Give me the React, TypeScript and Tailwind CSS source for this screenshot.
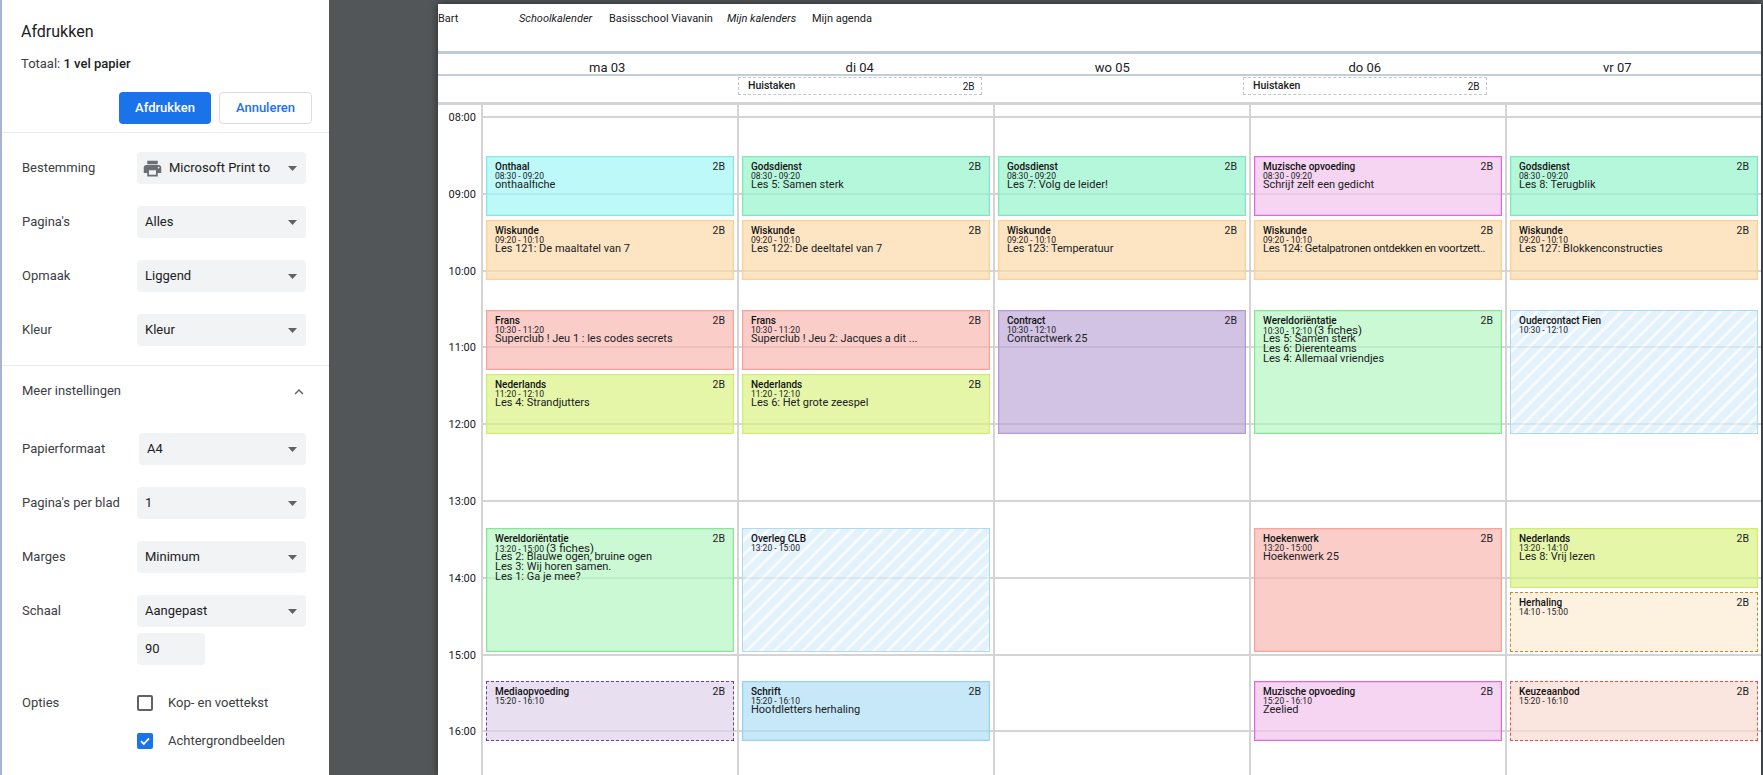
import { MdPrint, MdExpandLess } from "react-icons/md";

const HOUR = 76.8;
const HOURS = ["08:00", "09:00", "10:00", "11:00", "12:00", "13:00", "14:00", "15:00", "16:00"];

const STYLES = {
  cyan: "bg-[#a1f6f6b3] border border-[#86e9e4] shadow-[inset_0_0_0_1px_#86e9e440]",
  mint: "bg-[#95f4ccb3] border border-[#84e6bd] shadow-[inset_0_0_0_1px_#84e6bd40]",
  orange: "bg-[#fcd8a9b3] border border-[#fbd199] shadow-[inset_0_0_0_1px_#fbd19940]",
  red: "bg-[#f9b8b1b3] border border-[#fba398] shadow-[inset_0_0_0_1px_#fba39840]",
  lime: "bg-[#daf283b3] border border-[#d0ee72] shadow-[inset_0_0_0_1px_#d0ee7240]",
  purple: "bg-[#bfa8d8b3] border border-[#b29cd4] shadow-[inset_0_0_0_1px_#b29cd440]",
  green: "bg-[#b3f6c0b3] border border-[#88e696] shadow-[inset_0_0_0_1px_#88e69640]",
  pink: "bg-[#f1c3ebb3] border border-[#e268dc] shadow-[inset_0_0_0_1px_#e268dc40]",
  blue: "bg-[#afdef5b3] border border-[#98d2f0] shadow-[inset_0_0_0_1px_#98d2f040]",
  hatch:
    "border border-[#aed9f3] bg-[repeating-linear-gradient(135deg,#d7ecf9b3_0,#d7ecf9b3_7px,#f4f9fdb3_7px,#f4f9fdb3_10px)]",
  lavender: "bg-[#ded1eab3] border border-dashed border-[#6f3f9e]",
  peach: "bg-[#fcebd3b3] border border-dashed border-[#c4892c]",
  salmon: "bg-[#f9dbd1b3] border border-dashed border-[#ef4b40]",
};

type Ev = {
  title: string;
  from: string;
  to: string;
  kind: keyof typeof STYLES;
  lines?: string[];
  fiches?: string;
  noClass?: boolean;
  tight?: boolean;
};

const DAYS: Ev[][] = [
  [
    { title: "Onthaal", from: "08:30", to: "09:20", kind: "cyan", lines: ["onthaalfiche"] },
    { title: "Wiskunde", from: "09:20", to: "10:10", kind: "orange", lines: ["Les 121: De maaltafel van 7"] },
    { title: "Frans", from: "10:30", to: "11:20", kind: "red", lines: ["Superclub ! Jeu 1 : les codes secrets"] },
    { title: "Nederlands", from: "11:20", to: "12:10", kind: "lime", lines: ["Les 4: Strandjutters"] },
    {
      title: "Wereldoriëntatie",
      from: "13:20",
      to: "15:00",
      kind: "green",
      fiches: "(3 fiches)",
      lines: ["Les 2: Blauwe ogen, bruine ogen", "Les 3: Wij horen samen.", "Les 1: Ga je mee?"],
    },
    { title: "Mediaopvoeding", from: "15:20", to: "16:10", kind: "lavender" },
  ],
  [
    { title: "Godsdienst", from: "08:30", to: "09:20", kind: "mint", lines: ["Les 5: Samen sterk"] },
    { title: "Wiskunde", from: "09:20", to: "10:10", kind: "orange", lines: ["Les 122: De deeltafel van 7"] },
    { title: "Frans", from: "10:30", to: "11:20", kind: "red", lines: ["Superclub ! Jeu 2: Jacques a dit ..."] },
    { title: "Nederlands", from: "11:20", to: "12:10", kind: "lime", lines: ["Les 6: Het grote zeespel"] },
    { title: "Overleg CLB", from: "13:20", to: "15:00", kind: "hatch", noClass: true },
    { title: "Schrift", from: "15:20", to: "16:10", kind: "blue", lines: ["Hoofdletters herhaling"] },
  ],
  [
    { title: "Godsdienst", from: "08:30", to: "09:20", kind: "mint", lines: ["Les 7: Volg de leider!"] },
    { title: "Wiskunde", from: "09:20", to: "10:10", kind: "orange", lines: ["Les 123: Temperatuur"] },
    { title: "Contract", from: "10:30", to: "12:10", kind: "purple", lines: ["Contractwerk 25"] },
  ],
  [
    { title: "Muzische opvoeding", from: "08:30", to: "09:20", kind: "pink", lines: ["Schrijf zelf een gedicht"] },
    {
      title: "Wiskunde",
      from: "09:20",
      to: "10:10",
      kind: "orange",
      tight: true,
      lines: ["Les 124: Getalpatronen ontdekken en voortzett.."],
    },
    {
      title: "Wereldoriëntatie",
      from: "10:30",
      to: "12:10",
      kind: "green",
      fiches: "(3 fiches)",
      lines: ["Les 5: Samen sterk", "Les 6: Dierenteams", "Les 4: Allemaal vriendjes"],
    },
    { title: "Hoekenwerk", from: "13:20", to: "15:00", kind: "red", lines: ["Hoekenwerk 25"] },
    { title: "Muzische opvoeding", from: "15:20", to: "16:10", kind: "pink", lines: ["Zeelied"] },
  ],
  [
    { title: "Godsdienst", from: "08:30", to: "09:20", kind: "mint", lines: ["Les 8: Terugblik"] },
    { title: "Wiskunde", from: "09:20", to: "10:10", kind: "orange", lines: ["Les 127: Blokkenconstructies"] },
    { title: "Oudercontact Fien", from: "10:30", to: "12:10", kind: "hatch", noClass: true },
    { title: "Nederlands", from: "13:20", to: "14:10", kind: "lime", lines: ["Les 8: Vrij lezen"] },
    { title: "Herhaling", from: "14:10", to: "15:00", kind: "peach" },
    { title: "Keuzeaanbod", from: "15:20", to: "16:10", kind: "salmon" },
  ],
];

// y offset (px) of a clock time from the top of the grid body
function timeY(t: string) {
  const [h, m] = t.split(":").map(Number);
  return 11 + (h - 8 + m / 60) * HOUR;
}

function Caret() {
  return (
    <svg width="9" height="5" viewBox="0 0 9 5" className="shrink-0">
      <polygon points="0,0 9,0 4.5,5" fill="#5f6368" />
    </svg>
  );
}

function Select({ value, narrow, icon }: { value: string; narrow?: boolean; icon?: boolean }) {
  return (
    <div
      className={`flex h-8 items-center rounded bg-[#f1f3f4] pr-[9px] text-[13px] text-[#202124] ${
        narrow ? "ml-[2px] w-[167px] pl-2" : "w-[169px] pl-2"
      }`}
    >
      {icon && <MdPrint className="ml-[-3px] mr-[6px] text-[#6b6f73]" size={21} />}
      <span className="flex-1">{value}</span>
      <Caret />
    </div>
  );
}

function Row({ label, children }: { label: string; children: React.ReactNode }) {
  return (
    <div className="flex items-start">
      <div className="h-8 w-[135px] pl-[20px] text-[13px] leading-8 whitespace-nowrap text-[#3c4043]">{label}</div>
      {children}
    </div>
  );
}

function SidePanel() {
  return (
    <div className="flex h-full w-[327px] shrink-0 flex-col bg-white">
      <div className="h-[133px] shrink-0 border-b border-[#e8eaed] pr-[17px] pl-[19px]">
        <div className="pt-[22px] text-[16px] leading-5 text-[#202124]">Afdrukken</div>
        <div className="pt-[14px] text-[13px] leading-4 text-[#3c4043]">
          Totaal: <span className="font-medium text-[#202124]">1 vel papier</span>
        </div>
        <div className="flex justify-end gap-2 pt-[20px]">
          <div className="flex h-8 w-[92px] items-center justify-center rounded bg-[#1a73e8] text-[13px] font-medium text-white">
            Afdrukken
          </div>
          <div className="flex h-8 w-[93px] items-center justify-center rounded border border-[#dadce0] text-[13px] font-medium text-[#1a73e8]">
            Annuleren
          </div>
        </div>
      </div>
      <div className="flex h-[233px] shrink-0 flex-col gap-[22px] border-b border-[#e8eaed] pt-[19px]">
        <Row label="Bestemming">
          <Select value="Microsoft Print to" icon />
        </Row>
        <Row label="Pagina's">
          <Select value="Alles" />
        </Row>
        <Row label="Opmaak">
          <Select value="Liggend" />
        </Row>
        <Row label="Kleur">
          <Select value="Kleur" />
        </Row>
      </div>
      <div className="flex h-[67px] shrink-0 items-start justify-between pt-[17px] pr-[21px] pl-[20px] text-[13px] leading-4 text-[#3c4043]">
        <span>Meer instellingen</span>
        <MdExpandLess className="text-[#5f6368]" size={18} />
      </div>
      <div className="flex flex-col gap-[22px]">
        <Row label="Papierformaat">
          <Select value="A4" narrow />
        </Row>
        <Row label="Pagina's per blad">
          <Select value="1" />
        </Row>
        <Row label="Marges">
          <Select value="Minimum" />
        </Row>
        <div className="flex items-start">
          <div className="h-8 w-[135px] pl-[20px] text-[13px] leading-8 text-[#3c4043]">Schaal</div>
          <div className="flex flex-col gap-[6px]">
            <Select value="Aangepast" />
            <div className="flex h-8 w-[68px] items-center rounded bg-[#f1f3f4] pl-2 text-[13px] text-[#202124]">90</div>
          </div>
        </div>
      </div>
      <div className="flex pt-[30px]">
        <div className="w-[135px] pl-[20px] text-[13px] leading-4 text-[#3c4043]">Opties</div>
        <div className="flex flex-col gap-[22px]">
          <div className="flex h-4 items-center gap-[15px] text-[13px] text-[#3c4043]">
            <div className="h-4 w-4 rounded-[2px] border-2 border-[#5f6368]" />
            Kop- en voettekst
          </div>
          <div className="flex h-4 items-center gap-[15px] text-[13px] text-[#3c4043]">
            <div className="flex h-4 w-4 items-center justify-center rounded-[2px] bg-[#1a73e8]">
              <svg width="12" height="12" viewBox="0 0 12 12">
                <path d="M2 6.2 L4.8 9 L10 3.4" fill="none" stroke="white" strokeWidth="1.8" />
              </svg>
            </div>
            Achtergrondbeelden
          </div>
        </div>
      </div>
    </div>
  );
}

function EventCard({ ev, top }: { ev: Ev; top: number }) {
  const height = timeY(ev.to) - timeY(ev.from) - 4;
  return (
    <div
      className={`shrink-0 overflow-hidden pt-[5px] pr-2 pl-2 text-[#202124] ${STYLES[ev.kind]}`}
      style={{ marginTop: top, height }}
    >
      <div className="flex h-[10px] justify-between overflow-hidden text-[10px] leading-[10px]">
        <span className="font-medium text-[#111]">{ev.title}</span>
        {!ev.noClass && <span className="text-[10.5px]">2B</span>}
      </div>
      <div className="h-2 whitespace-nowrap text-[8.5px] leading-2">
        {ev.from} - {ev.to}
        {ev.fiches && <span className="ml-[2px] text-[11.5px]">{ev.fiches}</span>}
      </div>
      {ev.lines?.map((line) => (
        <div
          key={line}
          className={`h-[10px] overflow-hidden text-[11px] leading-[10px] whitespace-nowrap ${
            ev.tight ? "tracking-[-0.25px]" : ""
          }`}
        >
          {line}
        </div>
      ))}
    </div>
  );
}

function DayColumn({ events }: { events: Ev[] }) {
  let cursor = 0;
  return (
    <div className="flex flex-col border-l-2 border-[#d4d4d4] px-[3px]">
      {events.map((ev) => {
        const start = timeY(ev.from) + 2;
        const top = start - cursor;
        cursor = timeY(ev.to) - 2;
        return <EventCard key={ev.title + ev.from} ev={ev} top={top} />;
      })}
    </div>
  );
}

function AllDay({ on }: { on?: boolean }) {
  return (
    <div className="px-[4.5px] pt-px">
      {on && (
        <div className="flex h-[18px] items-center justify-between border border-dashed border-[#c0c7cf] pr-[6px] pl-[9px] text-[#202124]">
          <span className="text-[10.5px] font-medium">Huistaken</span>
          <span className="text-[10px]">2B</span>
        </div>
      )}
    </div>
  );
}

export default function App() {
  const days = ["ma 03", "di 04", "wo 05", "do 06", "vr 07"];
  return (
    <div className="flex h-[775px] w-[1763px] overflow-hidden bg-[#525659] font-['Roboto',sans-serif]">
      <div className="w-[2px] shrink-0 bg-[#a8b5cf]" />
      <SidePanel />
      <div className="flex h-full flex-1 pt-1 pr-[2px] pl-[109px]">
        <div className="flex h-full w-full flex-col overflow-hidden bg-white shadow-[0_0_7px_rgba(0,0,0,0.55)]">
          <div className="flex h-[50px] shrink-0 items-start border-b-[3px] border-[#bfcad4] pt-[9px] text-[11px] leading-3 text-[#202124]">
            <span className="w-[81px]">Bart</span>
            <span className="w-[90px] italic">Schoolkalender</span>
            <span className="w-[118px]">Basisschool Viavanin</span>
            <span className="w-[85px] italic">Mijn kalenders</span>
            <span>Mijn agenda</span>
          </div>
          <div className="grid h-[22px] shrink-0 grid-cols-[43px_repeat(5,252.5px)] border-b-2 border-[#c3cdd6] text-[13px] leading-[27px] text-[#202124]">
            <div />
            {days.map((d) => (
              <div key={d} className="text-center">
                {d}
              </div>
            ))}
          </div>
          <div className="grid h-[29px] shrink-0 grid-cols-[43px_repeat(5,252.5px)] border-b-[3px] border-[#d4d4d4]">
            <div />
            <AllDay />
            <AllDay on />
            <AllDay />
            <AllDay on />
            <AllDay />
          </div>
          <div className="grid min-h-0 flex-1 overflow-hidden">
            <div className="[grid-area:1/1] flex flex-col pt-[11px]">
              {HOURS.map((h) => (
                <div key={h} className="flex h-[76.8px] shrink-0 items-start">
                  <div className="-mt-[5px] h-[14px] w-[43px] pr-[5px] text-right text-[11px] leading-[14px] text-[#202124]">
                    {h}
                  </div>
                  <div className="h-[2px] flex-1 bg-[#d4d4d4]" />
                </div>
              ))}
            </div>
            <div className="[grid-area:1/1] grid grid-cols-[43px_repeat(5,256px)]">
              <div />
              {DAYS.map((events, i) => (
                <DayColumn key={i} events={events} />
              ))}
            </div>
          </div>
        </div>
      </div>
    </div>
  );
}
